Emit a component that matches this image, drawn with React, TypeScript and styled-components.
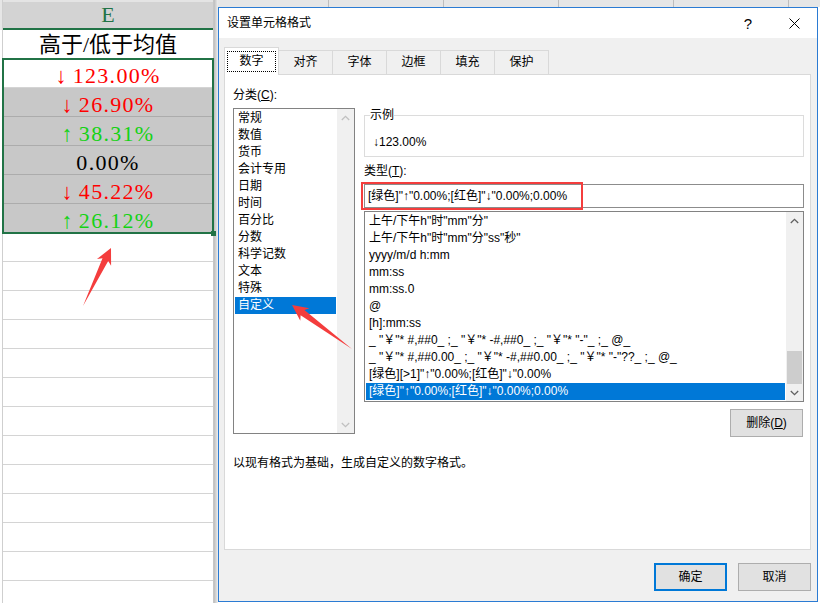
import React from 'react';
import styled, { createGlobalStyle } from 'styled-components';

const UI_FONT = '"Liberation Sans", "Noto Sans CJK SC", sans-serif';
const CELL_FONT = '"Liberation Serif", "Noto Sans CJK SC", serif';

const EXCEL_GREEN = '#217346';
const UP_COLOR = '#14d214';
const DOWN_COLOR = '#ff0000';
const ARROW_RED = '#f43d3d';

const GlobalStyle = createGlobalStyle`
  html, body { margin: 0; padding: 0; background: #fff; }
  body { font-family: ${UI_FONT}; }
`;

const Page = styled.div`
  position: relative;
  display: flex;
  width: 820px;
  height: 603px;
  overflow: hidden;
  background: #fff;
`;

/* ---------- spreadsheet behind the dialog ---------- */

const Sheet = styled.div`
  display: flex;
  flex: 0 0 218px;
  height: 100%;
`;

const RowStub = styled.div`
  width: 2px;
  border-right: 1px solid #cfcfcf;
  background: linear-gradient(#e6e6e6 0 30px, #fff 30px);
`;

const CellColumn = styled.div`
  display: flex;
  flex-direction: column;
  width: 210px;
  border-right: 1px solid #c6c6c6;
`;

const ColHeader = styled.div`
  flex: none;
  box-sizing: border-box;
  height: 30px;
  display: flex;
  align-items: center;
  justify-content: center;
  border-top: 2px solid #e4e4e4;
  border-bottom: 2px solid ${EXCEL_GREEN};
  background: #d3d3d3;
  color: ${EXCEL_GREEN};
  font: 22px/1 ${CELL_FONT};
`;

const Cell = styled.div<{ $gray?: boolean; $color?: string }>`
  flex: none;
  box-sizing: border-box;
  height: 29px;
  display: flex;
  align-items: flex-end;
  justify-content: center;
  border-bottom: 1px solid ${p => (p.$gray ? '#acacac' : '#d4d4d4')};
  background: ${p => (p.$gray ? '#c8c8c8' : '#fff')};
  color: ${p => p.$color ?? '#000'};
  font: 22px/22px ${CELL_FONT};
  letter-spacing: 1.3px;
  white-space: pre;
`;

const TitleCell = styled(Cell)`
  padding-bottom: 2px;
  letter-spacing: 0;
`;

const TrendMark = styled.span`
  margin-right: 5px;
`;

const Selection = styled.div`
  position: relative;
  outline: 2px solid ${EXCEL_GREEN};
  outline-offset: -1px;
`;

const FillHandle = styled.div`
  position: absolute;
  right: -3px;
  bottom: -3px;
  width: 5px;
  height: 5px;
  background: ${EXCEL_GREEN};
`;

const SheetShadow = styled.div`
  width: 4px;
  background: linear-gradient(90deg, #bdbdbd, #efefef);
`;

/* ---------- dialog ---------- */

const Desk = styled.div`
  flex: 1;
  display: flex;
  flex-direction: column;
  background: #fff;
`;

const HeaderStrip = styled.div`
  flex: none;
  height: 7px;
  background-color: #e6e6e6;
  background-image: repeating-linear-gradient(90deg, transparent 0 114px, #bdbdbd 114px 115px);
  background-position: -4px 0;
`;

const Dialog = styled.div`
  box-sizing: border-box;
  display: flex;
  flex-direction: column;
  width: 600px;
  height: 595px;
  border: 1px solid #2b7bd3;
  background: #f0f0f0;
  font: 12px/17px ${UI_FONT};
  color: #000;
`;

const TitleBar = styled.div`
  flex: none;
  display: flex;
  align-items: center;
  height: 30px;
  padding-left: 8px;
  background: #fff;
`;

const TitleText = styled.div`
  flex: 1;
`;

const TitleButton = styled.div`
  width: 46px;
  height: 30px;
  display: flex;
  align-items: center;
  justify-content: center;
  font: 15px/1 ${UI_FONT};
`;

const Body = styled.div`
  flex: 1;
  display: flex;
  flex-direction: column;
  padding: 0 6px 0 5px;
`;

const Tabs = styled.div`
  display: flex;
  align-items: flex-end;
  height: 27px;
  margin-top: 9px;
`;

const Tab = styled.div<{ $active?: boolean }>`
  position: relative;
  z-index: ${p => (p.$active ? 1 : 0)};
  box-sizing: border-box;
  display: flex;
  align-items: center;
  justify-content: center;
  width: ${p => (p.$active ? 55 : 54)}px;
  height: ${p => (p.$active ? 28 : 24)}px;
  margin-bottom: ${p => (p.$active ? -1 : 0)}px;
  border: 1px solid #d9d9d9;
  border-bottom: none;
  border-left-width: ${p => (p.$active ? 1 : 0)}px;
  background: ${p => (p.$active ? '#fff' : '#f0f0f0')};
`;

const FocusRing = styled.span`
  padding: 1px 11px;
  border: 1px dotted #000;
`;

const Panel = styled.div`
  box-sizing: border-box;
  height: 476px;
  padding: 12px 6px 0 8px;
  border: 1px solid #d9d9d9;
  background: #fff;
`;

const PanelGrid = styled.div`
  display: grid;
  grid-template-columns: 122px 440px;
  column-gap: 9px;
  align-items: start;
`;

const Column = styled.div`
  display: flex;
  flex-direction: column;
`;

const FieldLabel = styled.div<{ $gap: number; $top?: number }>`
  margin-top: ${p => p.$top ?? 0}px;
  margin-bottom: ${p => p.$gap}px;
`;

const Mnemonic = styled.span`
  text-decoration: underline;
`;

const ListBox = styled.div<{ $height: number; $top?: number }>`
  box-sizing: border-box;
  display: flex;
  height: ${p => p.$height}px;
  margin-top: ${p => p.$top ?? 0}px;
  border: 1px solid #828282;
  background: #fff;
`;

const ListItems = styled.div`
  flex: 1;
  min-width: 0;
  padding: 1px;
  overflow: hidden;
`;

const ListItem = styled.div<{ $selected?: boolean }>`
  height: 17px;
  padding-left: 3px;
  white-space: pre;
  background: ${p => (p.$selected ? '#0078d7' : 'transparent')};
  color: ${p => (p.$selected ? '#fff' : '#000')};
`;

const ScrollBar = styled.div`
  flex: none;
  display: flex;
  flex-direction: column;
  width: 17px;
  background: #f0f0f0;
`;

const ScrollButton = styled.div`
  flex: none;
  height: 17px;
  display: flex;
  align-items: center;
  justify-content: center;
`;

const ScrollTrack = styled.div`
  flex: 1;
  display: flex;
  flex-direction: column;
  justify-content: flex-end;
`;

const ScrollThumb = styled.div`
  height: 33px;
  margin: 0 1px;
  background: #cdcdcd;
`;

const SampleGroup = styled.fieldset`
  min-width: 0;
  margin: 20px 0 0;
  padding: 0 8px;
  border: 1px solid #dcdcdc;
`;

const SampleLegend = styled.legend`
  margin-left: -3px;
  padding: 0;
`;

const SampleText = styled.div`
  padding: 10px 0 5px;
`;

const InputWrap = styled.div`
  position: relative;
`;

const TypeInput = styled.div`
  box-sizing: border-box;
  height: 24px;
  padding: 0 3px;
  line-height: 22px;
  border: 1px solid #8c8c8c;
  background: #fff;
  white-space: pre;
`;

const Highlight = styled.div`
  position: absolute;
  left: -3px;
  top: -2px;
  box-sizing: border-box;
  width: 222px;
  height: 28px;
  border: 2px solid ${ARROW_RED};
`;

const Button = styled.div<{ $default?: boolean }>`
  box-sizing: border-box;
  display: flex;
  align-items: center;
  justify-content: center;
  width: 73px;
  height: 28px;
  border: ${p => (p.$default ? '2px solid #0078d7' : '1px solid #adadad')};
  background: #e1e1e1;
`;

const DeleteButton = styled(Button)`
  align-self: flex-end;
  margin-top: 7px;
  margin-right: 1px;
`;

const Description = styled.div`
  margin-top: 18px;
`;

const Footer = styled.div`
  display: flex;
  justify-content: flex-end;
  gap: 11px;
  padding-top: 13px;
`;

const Overlay = styled.svg`
  position: absolute;
  left: 0;
  top: 0;
  pointer-events: none;
`;

/* ---------- data ---------- */

type Trend = 'up' | 'down' | 'flat';

const values: { value: string; trend: Trend }[] = [
  { value: '123.00%', trend: 'down' },
  { value: '26.90%', trend: 'down' },
  { value: '38.31%', trend: 'up' },
  { value: '0.00%', trend: 'flat' },
  { value: '45.22%', trend: 'down' },
  { value: '26.12%', trend: 'up' },
];

const trendColor = (t: Trend) => (t === 'up' ? UP_COLOR : t === 'down' ? DOWN_COLOR : '#000');

const tabs = ['数字', '对齐', '字体', '边框', '填充', '保护'];

const categories = ['常规', '数值', '货币', '会计专用', '日期', '时间', '百分比', '分数', '科学记数', '文本', '特殊', '自定义'];

const formats = [
  '上午/下午h"时"mm"分"',
  '上午/下午h"时"mm"分"ss"秒"',
  'yyyy/m/d h:mm',
  'mm:ss',
  'mm:ss.0',
  '@',
  '[h]:mm:ss',
  '_ "￥"* #,##0_ ;_ "￥"* -#,##0_ ;_ "￥"* "-"_ ;_ @_ ',
  '_ "￥"* #,##0.00_ ;_ "￥"* -#,##0.00_ ;_ "￥"* "-"??_ ;_ @_ ',
  '[绿色][>1]"↑"0.00%;[红色]"↓"0.00%',
  '[绿色]"↑"0.00%;[红色]"↓"0.00%;0.00%',
];

const CURRENT_FORMAT = '[绿色]"↑"0.00%;[红色]"↓"0.00%;0.00%';

/* ---------- drawings ---------- */

const Chevron: React.FC<{ up?: boolean; color: string }> = ({ up, color }) => (
  <svg width="9" height="6" viewBox="0 0 9 6">
    <path
      d={up ? 'M0.8 5L4.5 1.3L8.2 5' : 'M0.8 1L4.5 4.7L8.2 1'}
      fill="none"
      stroke={color}
      strokeWidth="1.3"
    />
  </svg>
);

const CloseIcon = () => (
  <svg width="11" height="11" viewBox="0 0 11 11">
    <path d="M0.5 0.5L10.5 10.5M10.5 0.5L0.5 10.5" stroke="#000" strokeWidth="1" fill="none" />
  </svg>
);

// annotation arrow: pointed tail widening into a barbed head
function arrowPoints(x1: number, y1: number, x2: number, y2: number) {
  const dx = x2 - x1;
  const dy = y2 - y1;
  const len = Math.hypot(dx, dy);
  const ux = dx / len;
  const uy = dy / len;
  const at = (along: number, side: number) =>
    `${(x1 + ux * along - uy * side).toFixed(1)},${(y1 + uy * along + ux * side).toFixed(1)}`;
  return [at(0, 0), at(len - 13, 3.2), at(len - 16, 7.8), at(len, 0), at(len - 16, -7.8), at(len - 13, -3.2)].join(' ');
}

const ScrollColumn: React.FC<{ enabled?: boolean }> = ({ enabled }) => {
  const color = enabled ? '#606060' : '#c0c0c0';
  return (
    <ScrollBar>
      <ScrollButton>
        <Chevron up color={color} />
      </ScrollButton>
      <ScrollTrack>{enabled && <ScrollThumb />}</ScrollTrack>
      <ScrollButton>
        <Chevron color={color} />
      </ScrollButton>
    </ScrollBar>
  );
};

/* ---------- app ---------- */

const App: React.FC = () => {
  return (
    <Page>
      <GlobalStyle />
      <Sheet>
        <RowStub />
        <CellColumn>
          <ColHeader>E</ColHeader>
          <TitleCell>高于/低于均值</TitleCell>
          <Selection>
            {values.map((v, i) => (
              <Cell key={i} $gray={i > 0} $color={trendColor(v.trend)}>
                {v.trend !== 'flat' && <TrendMark>{v.trend === 'up' ? '↑' : '↓'}</TrendMark>}
                {v.value}
              </Cell>
            ))}
            <FillHandle />
          </Selection>
          {Array.from({ length: 13 }).map((_, i) => (
            <Cell key={i} />
          ))}
        </CellColumn>
        <SheetShadow />
      </Sheet>

      <Desk>
        <HeaderStrip />
        <Dialog>
          <TitleBar>
            <TitleText>设置单元格格式</TitleText>
            <TitleButton>?</TitleButton>
            <TitleButton>
              <CloseIcon />
            </TitleButton>
          </TitleBar>
          <Body>
            <Tabs>
              {tabs.map((t, i) => (
                <Tab key={t} $active={i === 0}>
                  {i === 0 ? <FocusRing>{t}</FocusRing> : t}
                </Tab>
              ))}
            </Tabs>
            <Panel>
              <PanelGrid>
                <Column>
                  <FieldLabel $gap={4}>
                    分类(<Mnemonic>C</Mnemonic>):
                  </FieldLabel>
                  <ListBox $height={326}>
                    <ListItems>
                      {categories.map(c => (
                        <ListItem key={c} $selected={c === '自定义'}>
                          {c}
                        </ListItem>
                      ))}
                    </ListItems>
                    <ScrollColumn />
                  </ListBox>
                </Column>
                <Column>
                  <SampleGroup>
                    <SampleLegend>示例</SampleLegend>
                    <SampleText>↓123.00%</SampleText>
                  </SampleGroup>
                  <FieldLabel $top={6} $gap={4}>
                    类型(<Mnemonic>T</Mnemonic>):
                  </FieldLabel>
                  <InputWrap>
                    <TypeInput>{CURRENT_FORMAT}</TypeInput>
                    <Highlight />
                  </InputWrap>
                  <ListBox $height={191} $top={3}>
                    <ListItems>
                      {formats.map(f => (
                        <ListItem key={f} $selected={f === CURRENT_FORMAT}>
                          {f}
                        </ListItem>
                      ))}
                    </ListItems>
                    <ScrollColumn enabled />
                  </ListBox>
                  <DeleteButton>
                    删除(<Mnemonic>D</Mnemonic>)
                  </DeleteButton>
                </Column>
              </PanelGrid>
              <Description>以现有格式为基础，生成自定义的数字格式。</Description>
            </Panel>
            <Footer>
              <Button $default>确定</Button>
              <Button>取消</Button>
            </Footer>
          </Body>
        </Dialog>
      </Desk>

      <Overlay width="820" height="603" viewBox="0 0 820 603">
        <polygon points={arrowPoints(83, 306, 111, 248)} fill={ARROW_RED} />
        <polygon points={arrowPoints(352, 349, 292, 305)} fill={ARROW_RED} />
      </Overlay>
    </Page>
  );
};

export default App;
